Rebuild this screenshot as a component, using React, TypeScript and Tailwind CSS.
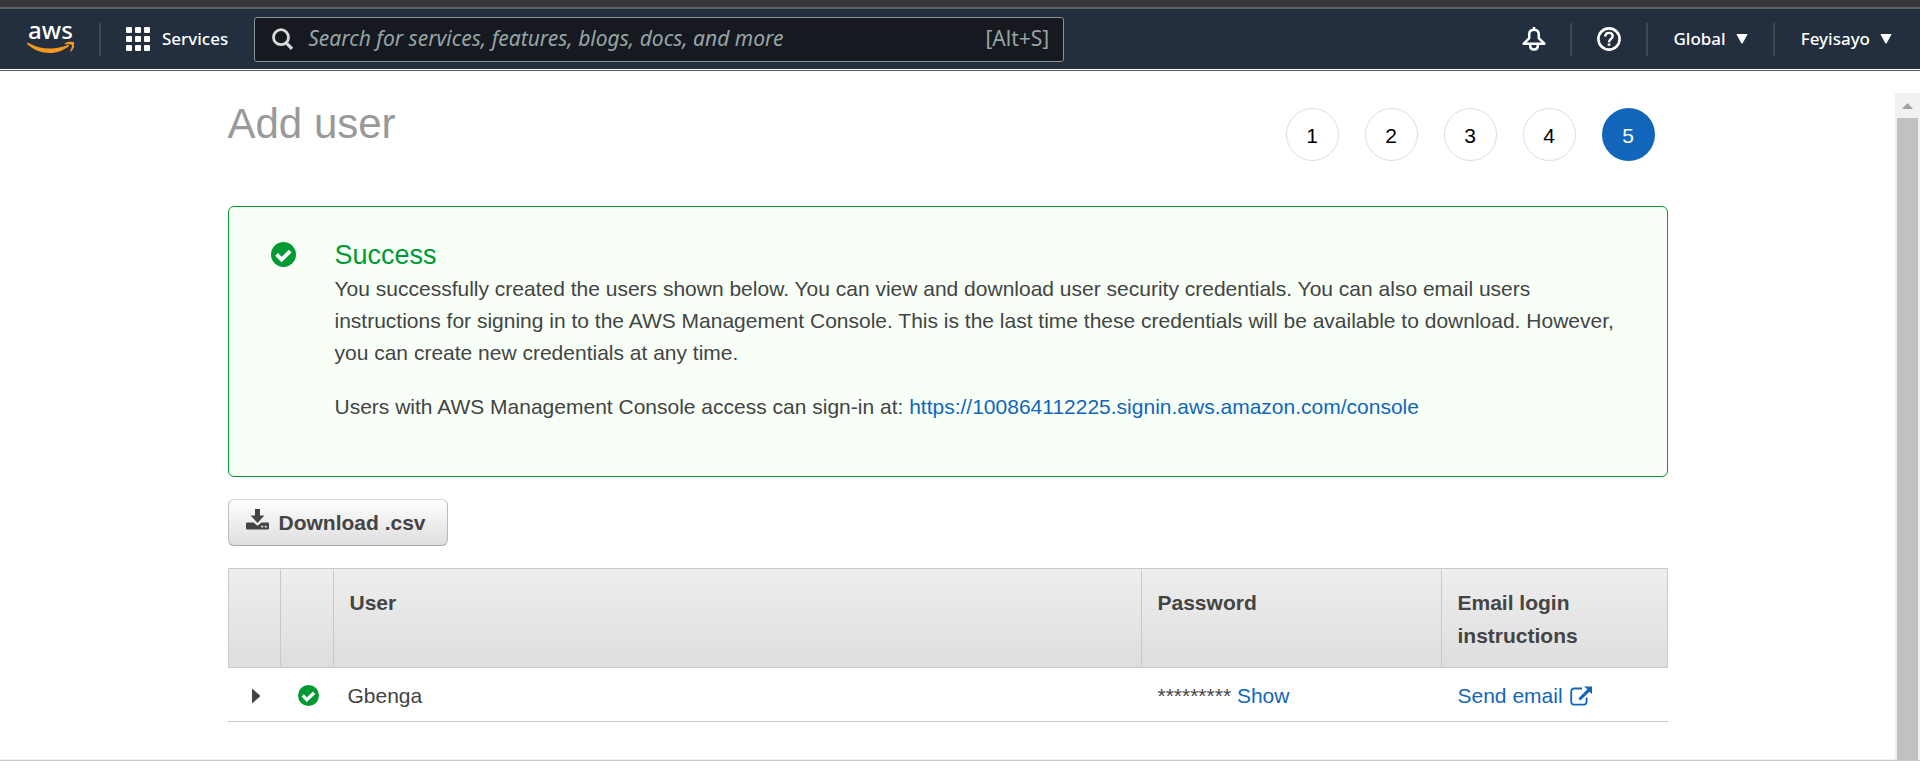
import React from "react";

function AwsLogo() {
  return (
    <a href="#" aria-label="AWS console home" className="shrink-0">
      <svg viewBox="0 0 47 55" className="h-[55px] w-[47px]" aria-hidden="true">
        <text x="23.5" y="27" textAnchor="middle" fontSize="24" fontWeight="500" fill="#fff" className="font-['Noto_Sans',sans-serif]">
          aws
        </text>
        <g transform="translate(-3.2 9.6) scale(1.12 1.05)" fill="#f7981f">
          <path d="M3 20.600c.3-.6 1-.5 1.700-.1C10 23.700 16.500 25.700 23.500 25.700c5.500 0 10.800-1.200 15.800-3.300 1-.4 1.600.6.7 1.300C35.400 27.100 29.500 30 23.400 30 15.500 30 8.500 26.800 3.400 21.900c-.5-.5-.6-.9-.4-1.300z" />
          <path d="M36.800 20.700c2-1.400 4.800-1.700 7.300-1.300 1.200.2 1.600.6 1.500 1.600-.2 2.700-1.300 5.400-3.200 7.200-.6.5-1.100.2-.9-.4.8-2 1.900-4.500 1.400-5.500-.5-1-3.100-.9-5.400-.7-.9.1-1.400-.4-.7-.9z" />
        </g>
      </svg>
    </a>
  );
}

function GridIcon() {
  return (
    <svg viewBox="0 0 24 24" className="size-6" fill="#fff" aria-hidden="true">
      {[0, 9, 18].map((y) =>
        [0, 9, 18].map((x) => <rect key={`${x}-${y}`} x={x} y={y} width="6" height="6" rx="1" />)
      )}
    </svg>
  );
}

function SearchIcon() {
  return (
    <svg viewBox="0 0 21 22" className="h-[22px] w-[21px] shrink-0" fill="none" stroke="#d5dbdb" strokeWidth="2.800" aria-hidden="true">
      <circle cx="9" cy="9.200" r="7.500" />
      <path d="M14 14.600l6 6.200" strokeWidth="3.200" />
    </svg>
  );
}

function BellIcon() {
  return (
    <svg viewBox="0 0 24 24" className="size-6" fill="none" stroke="#fff" strokeWidth="2.500" strokeLinejoin="round" aria-hidden="true">
      <path d="M12 0v3" />
      <path d="M12 2.800c-3.300 0-4.800 2.300-4.800 5v3.400L1.700 16.700h20.600l-5.500-5.500V7.800c0-2.700-1.500-5-4.800-5z" />
      <path d="M8.200 17v1.800c0 2.200 1.600 3.700 3.800 3.700s3.800-1.500 3.800-3.700V17" />
    </svg>
  );
}

function HelpIcon() {
  return (
    <svg viewBox="0 0 24 24" className="size-6" fill="none" stroke="#fff" strokeWidth="2.600" aria-hidden="true">
      <circle cx="12" cy="12" r="10.600" />
      <path d="M8.300 9.600c0-2.300 1.500-3.700 3.700-3.700s3.700 1.300 3.700 3.300c0 2.600-3.700 2.900-3.700 6" strokeWidth="2.400" />
      <path d="M12 16.400v2.400" />
    </svg>
  );
}

function CaretDown() {
  return (
    <svg viewBox="0 0 12 10" className="h-2.5 w-3" fill="#fff" aria-hidden="true">
      <path d="M.3 0h11.400L6.500 9.600h-1z" />
    </svg>
  );
}

function CheckCircle({ className }: { className: string }) {
  return (
    <svg viewBox="0 0 25 25" className={className} aria-hidden="true">
      <circle cx="12.500" cy="12.500" r="12.500" fill="#093" />
      <path d="M5.600 12.400l5 5.200 8.600-8.400" fill="none" stroke="#fff" strokeWidth="3.900" />
    </svg>
  );
}

function DownloadIcon() {
  return (
    <svg viewBox="0 0 23 21" className="h-[21px] w-[23px]" aria-hidden="true">
      <path d="M9 0h5v6.500h4.400L11.500 14 4.600 6.500H9z" fill="#444" />
      <path d="M1.200 13.500h6.300l4 3.300 4-3.300h6.300c.7 0 1.200.5 1.200 1.200v4.600c0 .7-.5 1.200-1.200 1.200H1.200C.5 20.500 0 20 0 19.300v-4.600c0-.7.5-1.200 1.200-1.200z" fill="#444" />
      <path d="M15.300 16.800h1.800v1.800h-1.800zM18.800 16.800h1.800v1.800h-1.800z" fill="#eee" />
    </svg>
  );
}

function ExternalIcon() {
  return (
    <svg viewBox="0 0 22 20" className="h-5 w-[22px]" aria-hidden="true">
      <path d="M12 2.500H4A2.800 2.800 0 0 0 1.200 5.300v10.500A2.800 2.800 0 0 0 4 18.600h9.800a2.800 2.800 0 0 0 2.800-2.800V11.500" fill="none" stroke="#1166bb" strokeWidth="1.800" />
      <path d="M14 .5h8V8l-2.500-2.300-9.200 8.700-1.900-1.900 9-9.200z" fill="#1166bb" />
    </svg>
  );
}

function Separator() {
  return <span className="h-[33px] w-0.5 shrink-0 bg-[#414750]" />;
}

function NavBar() {
  return (
    <header className="border-b border-[#545b64] font-['Noto_Sans',sans-serif] text-white">
      <div className="h-[7px] bg-[#35363a]" />
      <div className="h-0.5 bg-[#5f6063]" />
      <nav className="flex h-[61px] items-center border-b border-white bg-[#232f3e] pb-2 pt-2">
        <div className="flex shrink-0 items-center gap-[25px] pl-[27px] pr-[26px]">
          <AwsLogo />
          <Separator />
          <button type="button" className="flex items-center gap-3 text-[17px] font-medium leading-6">
            <GridIcon />
            Services
          </button>
        </div>
        <label className="flex h-[45px] max-w-[810px] flex-1 items-center rounded-[3px] border border-[#879596] bg-[#16191f] pl-[17px] pr-[14px] text-[21px] text-[#95a5a6]">
          <SearchIcon />
          <input
            type="search"
            aria-label="Search"
            placeholder="Search for services, features, blogs, docs, and more"
            className="ml-[15px] min-w-0 flex-1 bg-transparent italic outline-none placeholder:text-[#95a5a6]"
          />
          <span>[Alt+S]</span>
        </label>
        <div className="ml-auto flex shrink-0 items-center pr-7 text-[17px] font-medium leading-6">
          <button type="button" aria-label="Notifications" className="mr-6">
            <BellIcon />
          </button>
          <Separator />
          <button type="button" aria-label="Help" className="mx-[25px]">
            <HelpIcon />
          </button>
          <Separator />
          <button type="button" className="mx-[25px] flex items-center gap-2.5">
            Global
            <CaretDown />
          </button>
          <Separator />
          <button type="button" className="ml-[26px] flex items-center gap-2.5">
            Feyisayo
            <CaretDown />
          </button>
        </div>
      </nav>
    </header>
  );
}

function Steps() {
  return (
    <ol className="flex gap-[26px] pr-[13px] pt-[15px]">
      {[1, 2, 3, 4].map((n) => (
        <li key={n} className="flex size-[53px] items-center justify-center rounded-full border border-[#ddd] pt-0.5 text-black">
          {n}
        </li>
      ))}
      <li aria-current="step" className="flex size-[53px] items-center justify-center rounded-full bg-[#1166bb] pt-0.5 text-white">
        5
      </li>
    </ol>
  );
}

function SuccessPanel() {
  return (
    <section className="mt-[45px] flex rounded-md border border-[#093] bg-[#f7fff7] pb-[53px] pl-[42px] pr-10 pt-8">
      <CheckCircle className="mt-[3px] size-[25px] shrink-0" />
      <div className="ml-[39px] leading-8">
        <h2 className="text-[27px] leading-8 text-[#093]">Success</h2>
        <p className="mt-0.5">
          You successfully created the users shown below. You can view and download user security credentials. You can also email users
          instructions for signing in to the AWS Management Console. This is the last time these credentials will be available to download.
          However, you can create new credentials at any time.
        </p>
        <p className="mt-[22px]">
          Users with AWS Management Console access can sign-in at:{" "}
          <a href="#" className="text-[#1166bb]">
            https://100864112225.signin.aws.amazon.com/console
          </a>
        </p>
      </div>
    </section>
  );
}

function HeadCell({ children, className }: { children?: React.ReactNode; className: string }) {
  return (
    <th scope="col" className={`border-y border-[#c8c8c8] p-0 py-px text-left align-top font-bold leading-[33px] last:border-r ${className}`}>
      <div className="min-h-24 border-l border-[#c8c8c8] pl-4 pr-10 pt-4">{children}</div>
    </th>
  );
}

function UsersTable() {
  return (
    <table className="mt-[22px] w-full table-fixed border-separate border-spacing-0">
      <thead>
        <tr className="bg-linear-to-b from-[#eee] to-[#dedede]">
          <HeadCell className="w-[52px]" />
          <HeadCell className="w-[53px]" />
          <HeadCell className="">User</HeadCell>
          <HeadCell className="w-[300px]">Password</HeadCell>
          <HeadCell className="w-[227px]">Email login instructions</HeadCell>
        </tr>
      </thead>
      <tbody className="[&_td]:h-[54px] [&_td]:border-b [&_td]:border-[#c8c8c8] [&_td]:pt-0.5">
        <tr>
          <td>
            <button type="button" aria-label="Expand Gbenga" className="ml-6 block">
              <svg viewBox="0 0 8 14" className="h-[14px] w-2" fill="#444" aria-hidden="true">
                <path d="M0 0h.6L8 6.500v1L.6 14H0z" />
              </svg>
            </button>
          </td>
          <td>
            <CheckCircle className="ml-[18px] size-[21px]" />
          </td>
          <td className="pl-[15px]">Gbenga</td>
          <td className="pl-[17px]">
            *********{" "}
            <button type="button" className="text-[#1166bb]">
              Show
            </button>
          </td>
          <td className="pl-[17px]">
            <a href="#" className="flex items-center gap-[7px] text-[#1166bb]">
              Send email
              <ExternalIcon />
            </a>
          </td>
        </tr>
      </tbody>
    </table>
  );
}

function Scrollbar() {
  return (
    <div className="flex w-[25px] shrink-0 flex-col bg-[#f1f1f1]" aria-hidden="true">
      <div className="flex h-[25px] items-center justify-center">
        <svg viewBox="0 0 11 6" className="h-1.5 w-[11px]" fill="#a3a3a3">
          <path d="M0 6L5.500 0 11 6z" />
        </svg>
      </div>
      <div className="mx-0.5 flex-1 bg-[#c1c1c1]" />
    </div>
  );
}

export default function App() {
  return (
    <div className="flex min-h-screen flex-col bg-white font-['Liberation_Sans',Arial,sans-serif] text-[21px] text-[#444]">
      <NavBar />
      <div className="mb-[10px] mt-[22px] flex flex-1 border-b border-[#c8c8c8] shadow-[inset_0_-1px_0_#eee]">
        <main className="min-w-0 flex-1">
          <div className="mx-auto max-w-[1440px]">
            <div className="flex items-start justify-between">
              <h1 className="pt-1 text-[42px] leading-[54px] text-[#999]">Add user</h1>
              <Steps />
            </div>
            <SuccessPanel />
            <button
              type="button"
              className="mt-[22px] flex h-[47px] items-center gap-2.5 rounded-md border border-b-[#aaa] border-l-[#bbb] border-r-[#bbb] border-t-[#d5d5d5] bg-linear-to-b from-white to-[#dedede] pl-[17px] pr-[21px] font-bold"
            >
              <span className="pb-[7px]">
                <DownloadIcon />
              </span>
              Download .csv
            </button>
            <UsersTable />
          </div>
        </main>
        <Scrollbar />
      </div>
    </div>
  );
}
